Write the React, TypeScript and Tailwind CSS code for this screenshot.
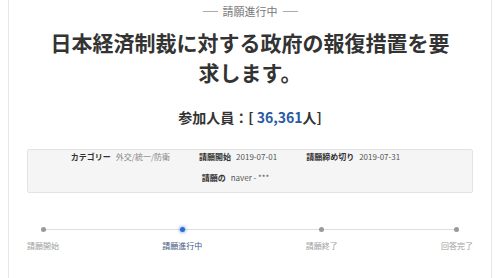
import React from "react";

const steps = [
  { label: "請願開始", active: false },
  { label: "請願進行中", active: true },
  { label: "請願終了", active: false },
  { label: "回答完了", active: false },
];

function InfoItem({ label, value, muted }: { label: string; value: string; muted?: boolean }) {
  return (
    <li className="mr-[29px] mb-[7px] leading-[14px] whitespace-nowrap">
      <span className="font-bold text-[#333]">{label}</span>
      <span className={`ml-[5px] ${muted ? "text-[#888]" : "text-[#555]"}`}>{value}</span>
    </li>
  );
}

export default function App() {
  return (
    <div className="min-h-[278px] bg-white px-2 font-['Noto_Sans_CJK_JP','Noto_Sans',sans-serif]">
      <div className="min-h-[278px] border-x border-[#e8e8e8] px-[18px]">
        {/* status header */}
        <div className="flex h-[22px] items-center justify-center gap-[5px] text-[11px] text-[#777]">
          <span className="h-px w-[15px] bg-[#aaa]" />
          <span>請願進行中</span>
          <span className="h-px w-[15px] bg-[#aaa]" />
        </div>

        {/* title */}
        <h1 className="mx-auto mt-[5px] w-[410px] text-center text-[21px] font-bold leading-[30px] text-[#333]">
          日本経済制裁に対する政府の報復措置を要求します。
        </h1>

        {/* participants */}
        <p className="mt-[20px] text-center text-[14px] font-bold leading-[20px] text-[#333]">
          参加人員：[ <span className="text-[#2a5aa5]">36,361</span>人]
        </p>

        {/* info box */}
        <div className="mt-[22px] rounded-[2px] border border-[#e3e3e3] bg-[#f5f5f5]">
          <ul className="flex flex-wrap justify-center text-[8px]">
            <InfoItem label="カテゴリー" value="外交/統一/防衛" muted />
            <InfoItem label="請願開始" value="2019-07-01" />
            <InfoItem label="請願締め切り" value="2019-07-31" />
            <InfoItem label="請願の" value="naver - ***" />
          </ul>
        </div>

        {/* progress */}
        <div className="relative mt-[34px] flex justify-between">
          <div className="absolute left-[16px] right-[16px] top-[2px] h-px bg-[#ddd]" />
          {steps.map((s) => (
            <div key={s.label} className="relative flex flex-col items-center">
              <span
                className={`h-[5px] w-[5px] rounded-full ${
                  s.active ? "bg-[#2b6bd1] shadow-[0_0_3px_1px_rgba(43,107,209,0.45)]" : "bg-[#999]"
                }`}
              />
              <span
                className={`mt-[8px] text-[8px] leading-[12px] ${
                  s.active ? "text-[#3f5680]" : "text-[#a0a0a0]"
                }`}
              >
                {s.label}
              </span>
            </div>
          ))}
        </div>
      </div>
    </div>
  );
}
